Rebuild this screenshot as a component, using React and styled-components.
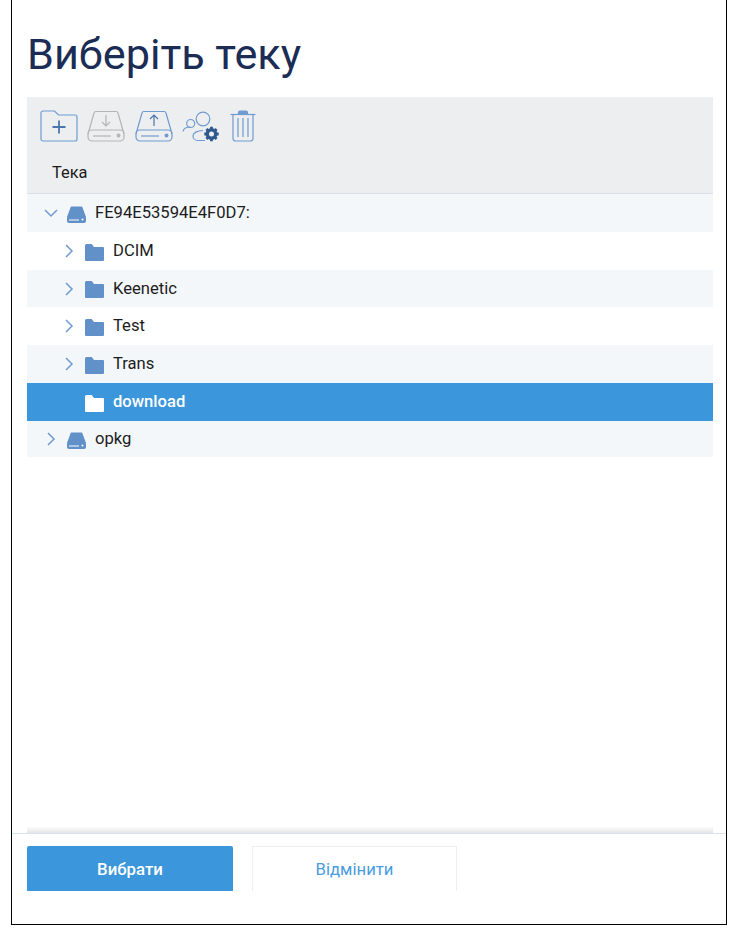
import React from "react";
import styled, { createGlobalStyle } from "styled-components";

const Global = createGlobalStyle`
  html, body { margin: 0; padding: 0; background: #fff; }
  body { font-family: Roboto, "Liberation Sans", sans-serif; }
`;
const Dialog = styled.div`
  box-sizing: border-box; width: 716px; height: 925px; margin-left: 11px;
  border: 1px solid #000; border-top: none; background: #fff;
  display: flex; flex-direction: column;
`;
const Title = styled.h1`
  margin: 0; padding: 27px 15px 0; height: 97px; box-sizing: border-box;
  font-size: 43.2px; line-height: 56px; font-weight: 400; color: #1b2d55;
`;
const Panel = styled.div`
  margin: 0 13px 0 15px; flex: 1; display: flex; flex-direction: column; min-height: 0;
`;
const Head = styled.div`
  height: 97px; box-sizing: border-box; background: #edeef0; border-bottom: 1px solid #d5e0ea;
  display: flex; flex-direction: column;
`;
const Tools = styled.div`
  display: flex; align-items: flex-start; gap: 9.4px; padding: 13px 0 0 13px; height: 47px; box-sizing: border-box;
`;
const ColumnName = styled.div`
  padding: 0 0 0 25px; font-size: 16.4px; line-height: 20px; color: #1a1a1a; margin-top: 19px;
`;
const Tree = styled.div`flex: 1;`;
const Row = styled.div`
  height: ${p => p.$h}px; display: flex; align-items: center;
  padding-left: ${p => p.$indent}px;
  background: ${p => (p.$selected ? "#3b96dc" : p.$tint ? "#f3f7fa" : "#fff")};
  color: ${p => (p.$selected ? "#fff" : "#1c1c1c")};
  font-size: 16.6px; font-weight: ${p => (p.$selected ? 500 : 400)};
`;
const Label = styled.span`
  margin-bottom: 1px;
`;
const Caret = styled.span`
  width: 18px; height: 18px; display: flex; align-items: center; justify-content: center; flex: none;
`;
const IconSlot = styled.span`
  display: flex; margin: 2px 9px 0 7px; flex: none;
`;
const Shade = styled.div`
  height: 6px; background: linear-gradient(#fbfbfb, #e6e6e6);
`;
const Footer = styled.div`
  height: 91px; box-sizing: border-box; border-top: 1px solid #d5e3f2;
  padding: 12px 0 0 15px; display: flex; gap: 19px; align-items: flex-start;
`;
const Primary = styled.div`
  width: 206px; height: 45px; border-radius: 2px 2px 0 0; background: #3b96dc; color: #fff;
  font-size: 16.8px; font-weight: 500; display: flex; align-items: center; justify-content: center;
`;
const Secondary = styled.div`
  width: 205px; height: 45px; box-sizing: border-box; border: 1px solid #eeeeee; border-bottom: none;
  color: #4a9ddf; font-size: 16.7px; display: flex; align-items: center; justify-content: center;
`;

const blue = "#6f9bd1";
const NewFolder = () => (
  <svg width="38" height="32" viewBox="0 0 38 32" fill="none" stroke={blue} strokeWidth="1.2">
    <path d="M1 29V3a2 2 0 0 1 2-2h11.500l4 4H35a2 2 0 0 1 2 2v22a2 2 0 0 1-2 2H3a2 2 0 0 1-2-2z" />
    <path d="M19 10.500v13M12.500 17h13" stroke="#4a76ad" strokeWidth="1.800" />
  </svg>
);
const Drive = ({ color, up }) => (
  <svg width="38" height="32" viewBox="0 0 38 32" fill="none" stroke={color} strokeWidth="1.2">
    <path d="M1 24l6-21a2 2 0 0 1 2-1.500h20a2 2 0 0 1 2 1.500l6 21" />
    <rect x="1" y="20" width="36" height="11" rx="4" />
    <path d="M6 26h18" />
    <circle cx="31.500" cy="25.500" r="1.400" fill={color} />
    {up ? <path d="M19 16V5M15 9l4-4 4 4" stroke="#4a76ad" /> : <path d="M19 5v11M15 12l4 4 4-4" />}
  </svg>
);
const Users = () => (
  <svg width="38" height="32" viewBox="0 0 38 32" fill="none" stroke={blue} strokeWidth="1.2">
    <circle cx="8.700" cy="13.500" r="4" />
    <circle cx="21" cy="9" r="6.800" />
    <path d="M1 21.500c.5-3 3.500-4.500 7.500-4.500" />
    <path d="M23 30.500h-7.500a4.500 4.500 0 0 1-4.500-4.500c0-3 4-5.500 10-5.500" />
    <circle cx="29.500" cy="24" r="4.200" stroke="#2f5a8f" strokeWidth="3.400" />
    <path d="M29.500 16.800v3M29.500 28.200v3M22.300 24h3M33.700 24h3M24.400 18.900l2 2M32.600 27.100l2 2M24.400 29.100l2-2M32.600 20.900l2-2" stroke="#2f5a8f" strokeWidth="2.800" />
  </svg>
);
const Trash = () => (
  <svg width="26" height="32" viewBox="0 0 26 32" fill="none" stroke={blue} strokeWidth="1.2">
    <path d="M.5 4.500h25" />
    <path d="M8.500 4V2.500a1.500 1.500 0 0 1 1.500-1.500h6a1.500 1.500 0 0 1 1.500 1.500V4" fill={blue} />
    <path d="M3 5v23.500a2.500 2.500 0 0 0 2.500 2.500h15a2.500 2.500 0 0 0 2.500-2.500V5" />
    <path d="M8 8v19M13 8v19M18 8v19" />
  </svg>
);
const Folder = ({ color }) => (
  <svg width="19" height="17" viewBox="0 0 19 17" style={{ display: "block" }}>
    <path d="M0 1.500A1.500 1.500 0 0 1 1.500 0h5.200l2.300 3h9a1 1 0 0 1 1 1v12a1 1 0 0 1-1 1H1a1 1 0 0 1-1-1z" fill={color} />
  </svg>
);
const Disk = () => (
  <svg width="19" height="17" viewBox="0 0 19 17" style={{ display: "block" }}>
    <path d="M3.500 1.500a1 1 0 0 1 1-1h10a1 1 0 0 1 1 1L19 11H0z" fill="#6290c8" />
    <rect x="0" y="10" width="19" height="7" rx="2" fill="#6290c8" />
    <path d="M2 14h10" stroke="#fff" strokeWidth="1" />
    <circle cx="15.500" cy="13.500" r="1" fill="#fff" />
  </svg>
);
const Chevron = ({ open }) => (
  <svg width="14" height="14" viewBox="0 0 14 14" fill="none" stroke="#6f9bd1" strokeWidth="1.500">
    {open ? <path d="M1 4l6 6 6-6" /> : <path d="M4 1l6 6-6 6" />}
  </svg>
);

const rows = [
  { name: "FE94E53594E4F0D7:", root: true, open: true, tint: true, h: 38 },
  { name: "DCIM", h: 38 },
  { name: "Keenetic", tint: true, h: 37 },
  { name: "Test", h: 38 },
  { name: "Trans", tint: true, h: 38 },
  { name: "download", selected: true, leaf: true, h: 38 },
  { name: "opkg", root: true, tint: true, h: 36 },
];

export default function App() {
  return (
    <>
      <Global />
      <Dialog>
        <Title>Виберіть теку</Title>
        <Panel>
          <Head>
            <Tools>
              <NewFolder />
              <Drive color="#b5b5b5" />
              <Drive color={blue} up />
              <Users />
              <Trash />
            </Tools>
            <ColumnName>Тека</ColumnName>
          </Head>
          <Tree>
            {rows.map(r => (
              <Row key={r.name} $indent={r.root ? 15 : 33} $tint={r.tint} $selected={r.selected} $h={r.h}>
                <Caret>{!r.leaf && <Chevron open={r.open} />}</Caret>
                <IconSlot>
                  {r.root ? <Disk /> : <Folder color={r.selected ? "#fff" : "#6290c8"} />}
                </IconSlot>
                <Label>{r.name}</Label>
              </Row>
            ))}
          </Tree>
          <Shade />
        </Panel>
        <Footer>
          <Primary>Вибрати</Primary>
          <Secondary>Відмінити</Secondary>
        </Footer>
      </Dialog>
    </>
  );
}
